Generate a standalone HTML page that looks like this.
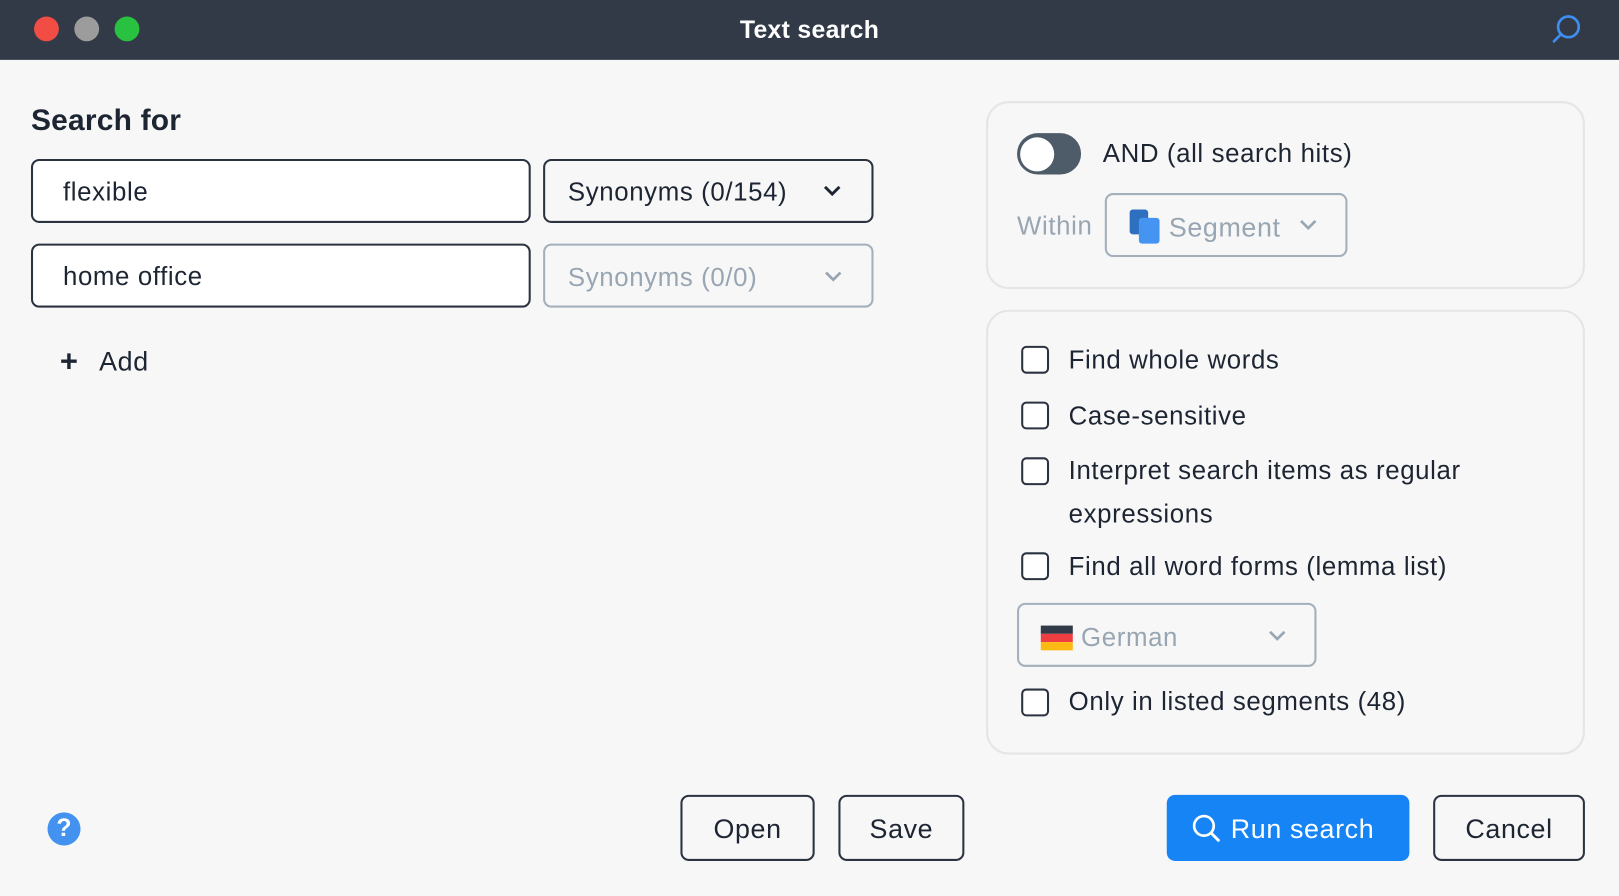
<!DOCTYPE html>
<html><head><meta charset="utf-8"><style>
html,body{margin:0;padding:0;width:1619px;height:896px;overflow:hidden;background:#f7f7f7}
#w{position:relative;width:1568px;height:868px;transform:scale(1.03253,1.0323);transform-origin:0 0;font-family:"Liberation Sans",sans-serif;color:#1d2533;background:#f7f7f7;letter-spacing:0.6px}
.a{position:absolute}
.tb{left:0;top:0;width:1568px;height:58px;background:#323a48}
.dot{top:16px;width:24px;height:24px;border-radius:50%}
.box{border:2px solid #2b3340;border-radius:8px;box-sizing:border-box;background:#fff;font-size:25px;line-height:60px;padding-left:29px}
.gbox{border:2px solid #a3afbb;border-radius:8px;box-sizing:border-box;font-size:25px;color:#98a5b3}
.panel{border:2px solid #e5e5e5;border-radius:22px;box-sizing:border-box;background:#f7f7f7}
.cb{width:27px;height:27px;border:2px solid #2b3340;border-radius:5px;box-sizing:border-box;background:#fff}
.lbl{font-size:25px;color:#1d2533}
.btn{border:2px solid #2b3340;border-radius:8px;box-sizing:border-box;font-size:26px;text-align:center;line-height:62px;background:#f7f7f7}
</style></head><body><div id="w">
<div class="a tb"></div>
<div class="a dot" style="left:33px;background:#f24d44"></div>
<div class="a dot" style="left:72px;background:#9c9c9c"></div>
<div class="a dot" style="left:111px;background:#29c240"></div>
<div class="a" style="left:0;width:1568px;top:16px;text-align:center;color:#fff;font-size:24px;font-weight:bold;letter-spacing:0.3px">Text search</div>
<svg class="a" style="left:1500px;top:12px" width="34" height="32" viewBox="0 0 34 32"><circle cx="19" cy="14" r="10" fill="none" stroke="#3d8ef0" stroke-width="2.6"/><line x1="12" y1="21" x2="5" y2="28" stroke="#3d8ef0" stroke-width="2.6" stroke-linecap="round"/></svg>

<div class="a" style="left:30px;top:101px;font-size:29px;font-weight:bold;color:#1d2533;letter-spacing:0.2px">Search for</div>
<div class="a box" style="left:30px;top:154px;width:484px;height:62px">flexible</div>
<div class="a box" style="left:30px;top:236px;width:484px;height:62px">home office</div>
<div class="a box" style="left:526px;top:154px;width:320px;height:62px;padding-left:22px;background:#f7f7f7">Synonyms (0/154)</div>
<svg class="a" style="left:797px;top:179px" width="18" height="12"><path d="M2 2l7 7 7-7" fill="none" stroke="#1d2533" stroke-width="2.8"/></svg>
<div class="a gbox" style="left:526px;top:236px;width:320px;height:62px;line-height:62px;padding-left:22px">Synonyms (0/0)</div>
<svg class="a" style="left:798px;top:262px" width="18" height="12"><path d="M2 2l7 7 7-7" fill="none" stroke="#98a5b3" stroke-width="2.6"/></svg>
<div class="a" style="left:58px;top:334px;font-size:30px;font-weight:bold">+</div>
<div class="a" style="left:96px;top:335px;font-size:26px">Add</div>

<div class="a panel" style="left:955px;top:98px;width:580px;height:182px"></div>
<div class="a" style="left:985px;top:129px;width:62px;height:40px;border-radius:20px;background:#4e5c69"></div>
<div class="a" style="left:988px;top:133px;width:33px;height:33px;border-radius:50%;background:#fff"></div>
<div class="a lbl" style="left:1068px;top:135px">AND (all search hits)</div>
<div class="a" style="left:985px;top:205px;font-size:25px;color:#98a5b3">Within</div>
<div class="a gbox" style="left:1070px;top:187px;width:235px;height:62px"></div>
<svg class="a" style="left:1094px;top:203px" width="30" height="34"><rect x="0" y="0" width="18" height="24" rx="3" fill="#2f6fbf"/><rect x="9" y="8" width="20" height="25" rx="3" fill="#4694f2"/></svg>
<div class="a" style="left:1132px;top:205px;font-size:26px;color:#98a5b3">Segment</div>
<svg class="a" style="left:1258px;top:212px" width="18" height="12"><path d="M2 2l7 7 7-7" fill="none" stroke="#98a5b3" stroke-width="2.6"/></svg>

<div class="a panel" style="left:955px;top:300px;width:580px;height:431px"></div>
<div class="a cb" style="left:989px;top:335px"></div><div class="a lbl" style="left:1035px;top:335px">Find whole words</div>
<div class="a cb" style="left:989px;top:389px"></div><div class="a lbl" style="left:1035px;top:389px">Case-sensitive</div>
<div class="a cb" style="left:989px;top:443px"></div><div class="a lbl" style="left:1035px;top:443px;line-height:42px;width:440px;margin-top:-8px">Interpret search items as regular expressions</div>
<div class="a cb" style="left:989px;top:535px"></div><div class="a lbl" style="left:1035px;top:535px">Find all word forms (lemma list)</div>
<div class="a gbox" style="left:985px;top:584px;width:290px;height:62px"></div>
<div class="a" style="left:1008px;top:606px;width:31px;height:8px;background:#323a48"></div>
<div class="a" style="left:1008px;top:614px;width:31px;height:8px;background:#ef3e42"></div>
<div class="a" style="left:1008px;top:622px;width:31px;height:8px;background:#fdb913"></div>
<div class="a" style="left:1047px;top:604px;font-size:25px;color:#98a5b3">German</div>
<svg class="a" style="left:1228px;top:610px" width="18" height="12"><path d="M2 2l7 7 7-7" fill="none" stroke="#98a5b3" stroke-width="2.6"/></svg>
<div class="a cb" style="left:989px;top:667px"></div><div class="a lbl" style="left:1035px;top:666px">Only in listed segments (48)</div>

<div class="a" style="left:46px;top:787px;width:32px;height:32px;border-radius:50%;background:#4392f0;color:#fff;font-size:24px;font-weight:bold;text-align:center;line-height:32px;letter-spacing:0">?</div>
<div class="a btn" style="left:659px;top:770px;width:130px;height:64px">Open</div>
<div class="a btn" style="left:812px;top:770px;width:122px;height:64px">Save</div>
<div class="a" style="left:1130px;top:770px;width:235px;height:64px;border-radius:8px;background:#1784f5"></div>
<svg class="a" style="left:1153px;top:787px" width="30" height="30"><circle cx="13" cy="13" r="9.5" fill="none" stroke="#fff" stroke-width="2.6"/><line x1="20" y1="20" x2="27" y2="27" stroke="#fff" stroke-width="2.8" stroke-linecap="round"/></svg>
<div class="a" style="left:1192px;top:788px;font-size:26px;color:#fff">Run search</div>
<div class="a btn" style="left:1388px;top:770px;width:147px;height:64px">Cancel</div>
</div></body></html>
